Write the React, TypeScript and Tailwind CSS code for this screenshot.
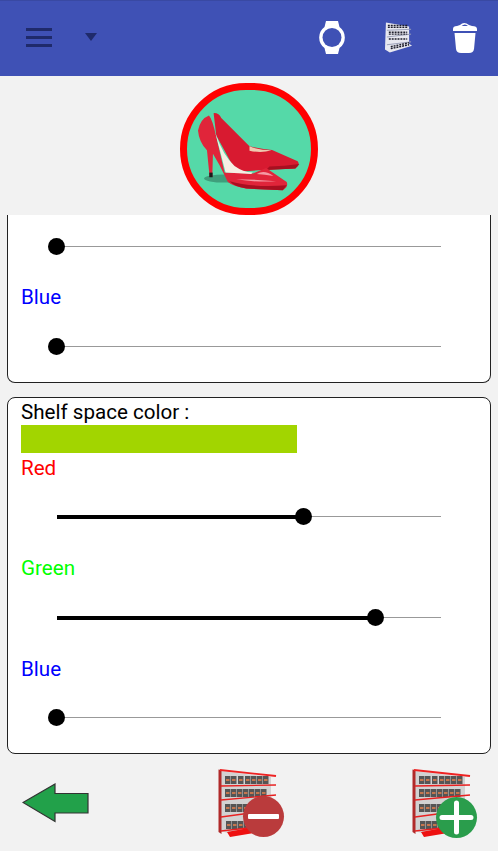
import React from "react";

function Slider({value = 0}: {value?: number}) {
    return (
        <div className="relative h-[17px] w-[384px] ml-[36px] flex items-center">
            <div className="w-full h-px bg-[#999999]"/>
            {value > 0 && (
                <div className="absolute left-0 h-1 bg-black" style={{width: `${value}%`}}/>
            )}
            <div className="absolute w-[17px] h-[17px] -ml-[9px] rounded-full bg-black" style={{left: `${value}%`}}/>
        </div>
    )
}

function ShelfGraphic() {
    const rows = [
        {y: 7, x: [7, 13, 20, 27, 33, 39, 45]},
        {y: 20, x: [7, 13, 19, 25, 31, 37, 43]},
        {y: 35, x: [7, 13, 19, 25, 31]},
        {y: 52, x: [8, 14, 20, 26]},
    ]
    return (
        <svg viewBox="0 0 59 68" width="59" height="68" className="absolute left-0 top-0">
            <path d="M2 2 L53 8 L53 56 L10 64 L2 62 Z" fill="#d2d2d2"/>
            {rows.map((r) => r.x.map((x) => (
                <g key={`${r.y}-${x}`}>
                    <rect x={x} y={r.y} width="5.500" height="8" fill="#555555"/>
                    <rect x={x + 1} y={r.y + 3} width="3.500" height="2" fill="#c4764f"/>
                </g>
            )))}
            <path d="M0.500 0.500 L3.500 1 L3.500 65 L0.500 63 Z" fill="#b02a2a"/>
            <path d="M2 1 L58 7" stroke="#ee2222" strokeWidth="1.800" fill="none"/>
            <path d="M3 17 L58 16 M3 31 L58 26 M3 48 L40 43 M3 62 L30 59" stroke="#e82020" strokeWidth="1.300" fill="none"/>
            <path d="M9 63 L36 58 L36 64 L12 68 Z" fill="#ee1111"/>
        </svg>
    )
}

function ShelfMinus() {
    return (
        <div className="relative w-[65px] h-[69px]">
            <ShelfGraphic/>
            <div className="absolute left-[25px] top-[27px] w-[41px] h-[41px] rounded-full bg-[#ba3b3c] flex items-center justify-center">
                <div className="w-[31px] h-[5px] bg-white rounded-[1px]"/>
            </div>
        </div>
    )
}

function ShelfPlus() {
    return (
        <div className="relative w-[65px] h-[69px]">
            <ShelfGraphic/>
            <div className="absolute left-[24px] top-[28px] w-[41px] h-[41px] rounded-full bg-[#2a9d4c] flex items-center justify-center">
                <svg viewBox="0 0 41 41" width="41" height="41">
                    <path d="M20.500 6 V35 M6 20.500 H35" stroke="#fff" strokeWidth="5" strokeLinecap="round"/>
                </svg>
            </div>
        </div>
    )
}

function Shoes() {
    return (
        <svg viewBox="85 110 310 240" width="103" height="80" className="mt-[5px]">
            <ellipse cx="165" cy="310" rx="62" ry="12" fill="#3f9f7c"/>
            {/* back shoe */}
            <path d="M132 113 Q148 112 155 128 L240 213 Q280 222 308 224 L385 258 Q394 270 378 280 L280 284 L200 290 L140 180 Z" fill="#d81a30"/>
            <path d="M240 226 Q275 234 306 225 Q270 225 240 213 Z" fill="#efc9b0"/>
            <path d="M300 274 Q345 272 390 266 L378 280 L290 284 Z" fill="#a80f20"/>
            {/* front shoe */}
            <path d="M85 165 Q92 130 118 120 Q128 130 140 185 L165 292 L250 295 L290 278 L352 320 Q358 335 340 345 L230 340 Q190 332 175 320 L150 270 L130 235 L128 305 L120 305 L112 225 Q88 200 85 165 Z" fill="#e0253a"/>
            <path d="M138 175 Q160 240 195 272 Q220 290 250 292 L245 296 L168 292 Z" fill="#f7efe4"/>
            <path d="M180 318 Q250 338 352 330 L340 345 L230 340 Q195 334 180 318 Z" fill="#a80f20"/>
            <path d="M200 312 Q260 322 320 318 Q260 312 200 312 Z" fill="#f49aa4"/>
            <path d="M262 296 Q285 282 312 302 Q285 298 262 296 Z" fill="#f49aa4"/>
            <rect x="119" y="292" width="10" height="14" fill="#1c1c1c"/>
        </svg>
    )
}

export default function App() {
    return (
        <div className="w-[498px] h-[851px] overflow-hidden bg-[#f2f2f2] flex flex-col font-['Roboto',sans-serif] text-[20.6px] leading-[30px]">
            <header className="h-[76px] bg-[#3f51b5] border-t border-[#3949a3] flex items-center pl-[26px] pr-[21px]">
                <div className="w-[26px] flex flex-col gap-[5px] -mt-[3px]">
                    <div className="h-[3px] bg-[#1f2a6b]"/>
                    <div className="h-[3px] bg-[#1f2a6b]"/>
                    <div className="h-[3px] bg-[#1f2a6b]"/>
                </div>
                <div className="ml-[33px] -mt-[3px] w-0 h-0 border-x-[6.500px] border-x-transparent border-t-[8px] border-t-[#1f2a6b]"/>
                <div className="ml-auto flex items-center gap-[39px] -mt-[3px]">
                    <svg viewBox="0 0 26 33" width="26" height="33">
                        <path d="M7 0 H19 L20.500 6 A13 13 0 0 1 20.500 27 L19 33 H7 L5.500 27 A13 13 0 0 1 5.500 6 Z" fill="#fff"/>
                        <circle cx="13" cy="16.500" r="9.500" fill="#3f51b5"/>
                    </svg>
                    <svg viewBox="0 0 30 33" width="29" height="33">
                        <path d="M2 1 L26 5 L26 23 L29 25 L6 32 L1 29 Z" fill="#e8e8f0"/>
                        <path d="M3 9 L28 8 M3 16 L28 13 M3 24 L28 21" stroke="#9aa0b8" strokeWidth="1"/>
                        <path d="M4 4 H24 M4 6 H24 M5 11 H24 M5 13 H24 M5 18 H24 M7 28 L26 24 M7 26 L26 22" stroke="#1d1d2b" strokeWidth="1.500" strokeDasharray="2 1"/>
                    </svg>
                    <svg viewBox="0 0 25 32" width="25" height="32">
                        <path d="M1 8 Q1 5 5 5 L8 4 Q12 0 17 4 L20 5 Q25 5 25 8 L25 10 L1 10 Z M9.500 5 H16 Q13 2 9.500 5 Z" fill="#fff" fillRule="evenodd"/>
                        <path d="M2.500 12 H23.500 L22 28 Q21.500 32 17 32 H9 Q4.500 32 4 28 Z" fill="#fff"/>
                    </svg>
                </div>
            </header>

            <div className="h-[139px] flex justify-center pt-[7px]">
                <div className="w-[138px] h-[132px] rounded-full border-[7px] border-[#ff0000] bg-[#55d9a8] flex items-center justify-center">
                    <Shoes/>
                </div>
            </div>

            <section className="mx-[7px] h-[168px] bg-white border border-t-0 border-[#222] rounded-b-[8px] pl-[13px] pt-[23px]">
                <Slider/>
                <div className="mt-[27px] text-[#0000ff]">Blue</div>
                <div className="mt-[26px]"><Slider/></div>
            </section>

            <section className="mx-[7px] mt-[14px] h-[357px] bg-white border border-[#222] rounded-[8px] pl-[13px] pt-px">
                <div className="h-[26px] leading-[26px] text-black">Shelf space color :</div>
                <div className="w-[276px] h-[28px] bg-[#a2d500]"/>
                <div className="text-[#ff0000]">Red</div>
                <div className="mt-[25px]"><Slider value={64.3}/></div>
                <div className="mt-[28px] text-[#00ff00]">Green</div>
                <div className="mt-[26px]"><Slider value={83}/></div>
                <div className="mt-[28px] text-[#0000ff]">Blue</div>
                <div className="mt-[25px]"><Slider/></div>
            </section>

            <footer className="flex-1 flex items-center justify-between pl-[22px] pr-[21px] pt-[1px]">
                <svg viewBox="0 0 67 40" width="67" height="40">
                    <path d="M1 19.500 L33 1 V10.500 H66 V30 H33 L33 38.500 Z" fill="#22a14a" stroke="#333" strokeWidth="1.200"/>
                </svg>
                <ShelfMinus/>
                <ShelfPlus/>
            </footer>
        </div>
    )
}
